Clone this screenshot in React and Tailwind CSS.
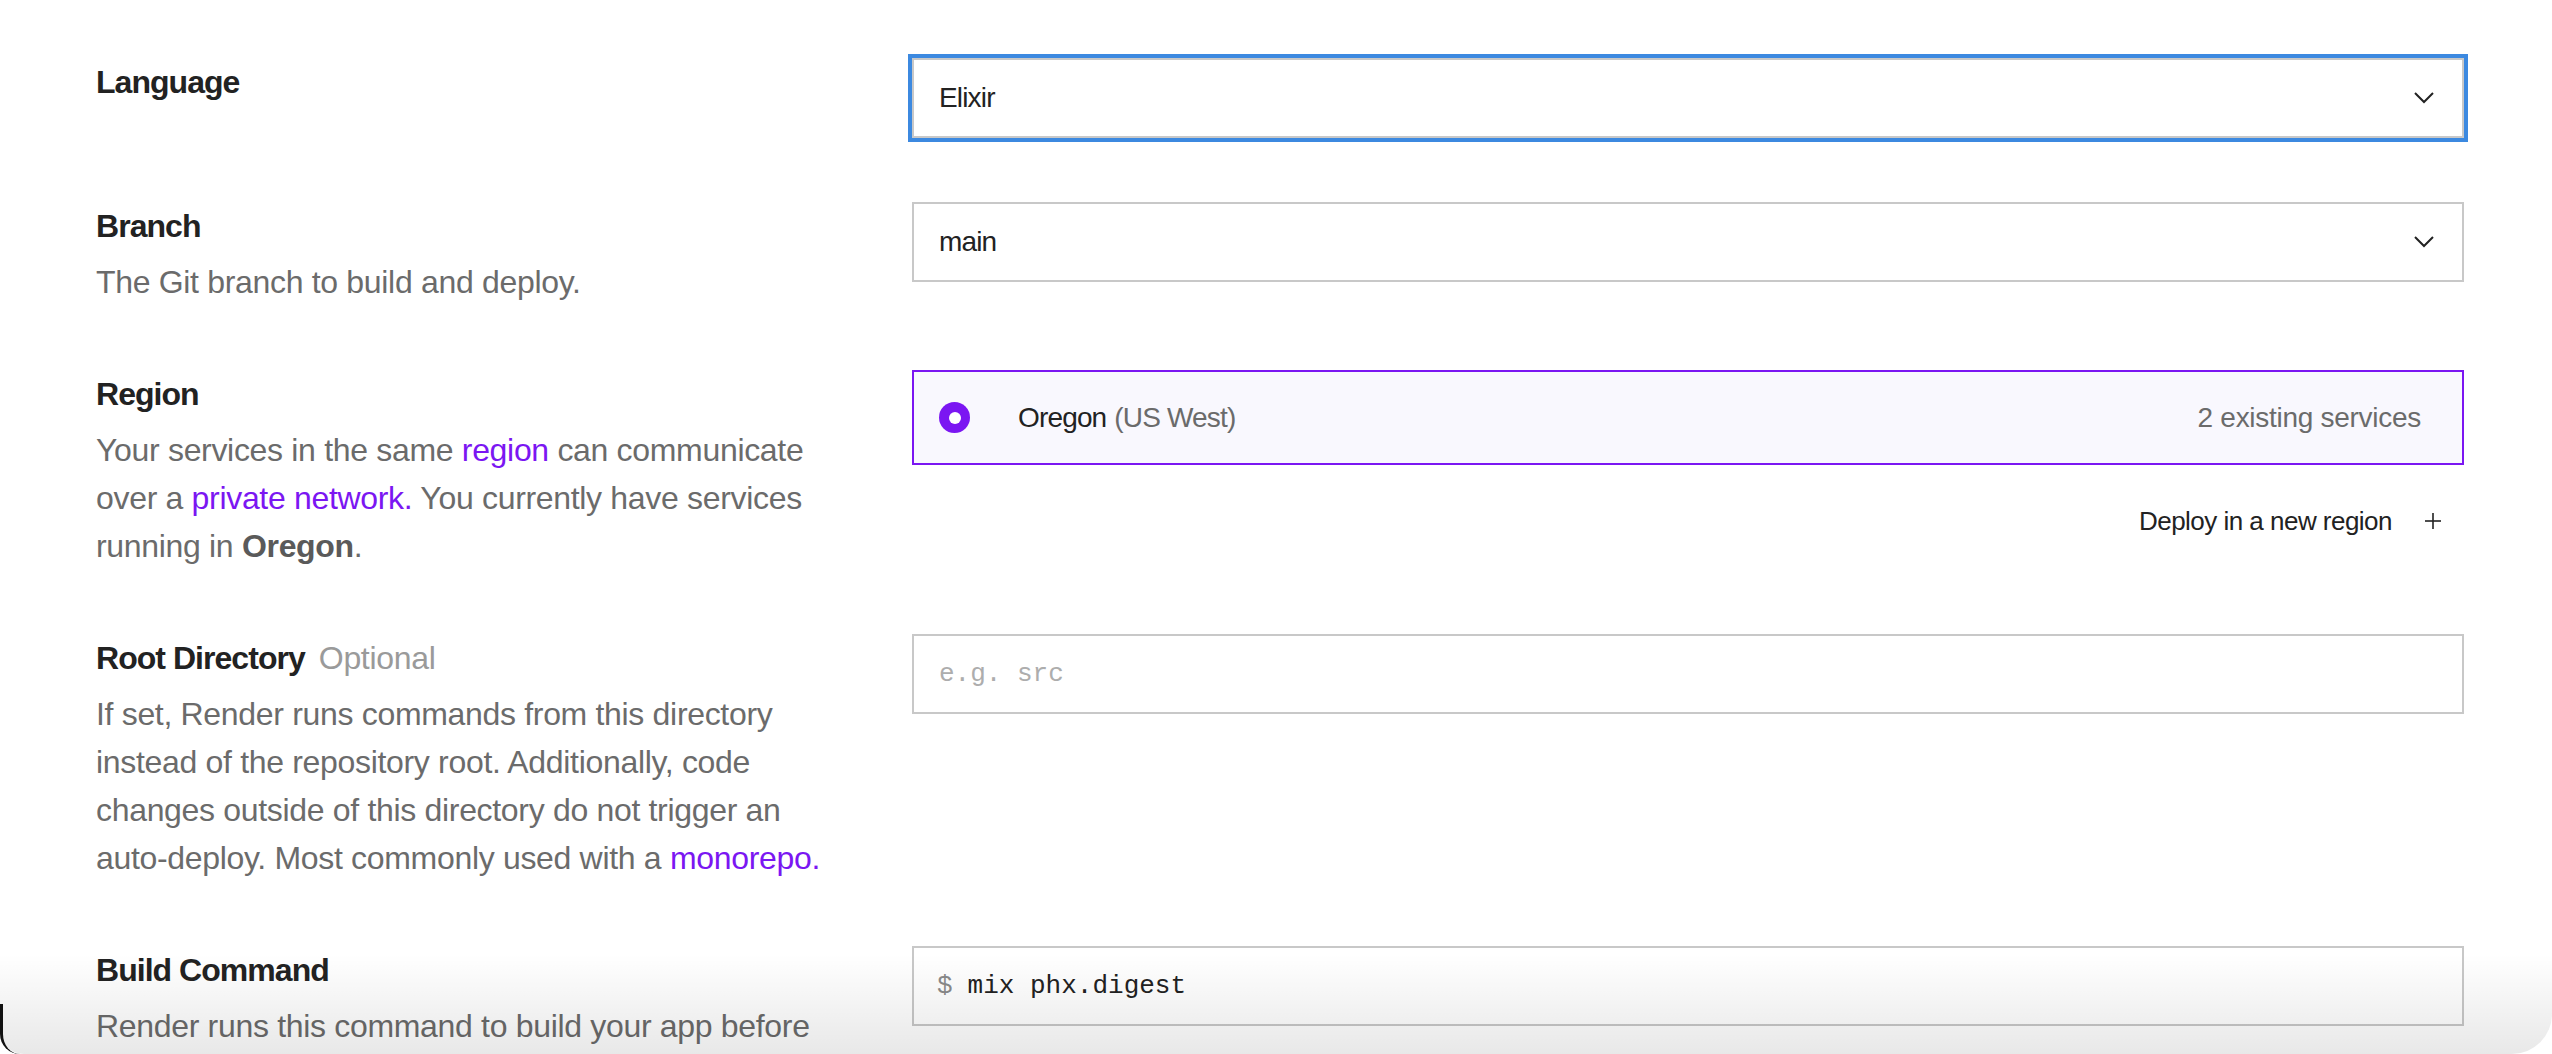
import React from 'react'

// Service settings form: label column on the left, controls on the right

const purple = 'text-[#7b16f2]'

function Label({ children, optional }) {
  return (
    <div className="text-[32px] leading-[48px] font-bold text-[#222] tracking-[-0.03em]">
      {children}
      {optional && (
        <span className="ml-[14px] font-normal text-[#9a9a9a] tracking-[-0.01em]">Optional</span>
      )}
    </div>
  )
}

function Desc({ children }) {
  return (
    <p className="mt-[8px] text-[32px] leading-[48px] text-[#6b6b6b] tracking-[-0.01em]">{children}</p>
  )
}

function Chevron() {
  return (
    <svg width="22" height="14" viewBox="0 0 22 14" fill="none" stroke="#222" strokeWidth="2">
      <polyline points="2,2 11,11 20,2" />
    </svg>
  )
}

function Select({ value, focused }) {
  return (
    <div
      className={`h-[80px] border-2 border-[#c8c8c8] bg-white flex items-center justify-between pl-[25px] pr-[27px] text-[28px] text-[#222] tracking-[-0.03em] ${
        focused ? 'ring-4 ring-[#3c89e0]' : ''
      }`}
    >
      <span>{value}</span>
      <Chevron />
    </div>
  )
}

function Row({ left, right }) {
  return (
    <div className="grid grid-cols-[744px_1fr] gap-x-[72px]">
      <div>{left}</div>
      <div>{right}</div>
    </div>
  )
}

export default function App() {
  return (
    <div className="relative h-[1054px] overflow-hidden bg-white font-['Liberation_Sans',Arial,sans-serif]">
      <div className="pl-[96px] pr-[88px] pt-[58px] flex flex-col gap-[64px]">
        <Row left={<Label>Language</Label>} right={<Select value="Elixir" focused />} />

        <Row
          left={
            <>
              <Label>Branch</Label>
              <Desc>The Git branch to build and deploy.</Desc>
            </>
          }
          right={<Select value="main" />}
        />

        <Row
          left={
            <>
              <Label>Region</Label>
              <Desc>
                Your services in the same <span className={purple}>region</span> can communicate over a{' '}
                <span className={purple}>private network.</span> You currently have services running in{' '}
                <b className="font-bold text-[#5a5a5a]">Oregon</b>.
              </Desc>
            </>
          }
          right={
            <>
              <div className="h-[95px] border-2 border-[#7b16f2] bg-[#f9f8fe] flex items-center pl-[25px] pr-[41px] text-[28px] tracking-[-0.03em]">
                <div className="w-[31px] h-[31px] rounded-full bg-[#7b16f2] flex items-center justify-center">
                  <div className="w-[12px] h-[12px] rounded-full bg-white" />
                </div>
                <span className="ml-[48px] text-[#222]">Oregon</span>
                <span className="ml-[8px] text-[#6b6b6b]">(US West)</span>
                <span className="ml-auto text-[#6b6b6b] tracking-[-0.01em]">2 existing services</span>
              </div>
              <div className="mt-[36px] h-[40px] flex items-center justify-end pr-[22px] text-[26px] text-[#222] tracking-[-0.02em]">
                <span>Deploy in a new region</span>
                <svg className="ml-[32px]" width="18" height="18" viewBox="0 0 18 18" stroke="#222" strokeWidth="1.6">
                  <line x1="9" y1="1" x2="9" y2="17" />
                  <line x1="1" y1="9" x2="17" y2="9" />
                </svg>
              </div>
            </>
          }
        />

        <Row
          left={
            <>
              <Label optional>Root Directory</Label>
              <Desc>
                If set, Render runs commands from this directory instead of the repository root. Additionally, code
                changes outside of this directory do not trigger an auto-deploy. Most commonly used with a{' '}
                <span className={purple}>monorepo.</span>
              </Desc>
            </>
          }
          right={
            <input
              placeholder="e.g. src"
              className="w-full h-[80px] border-2 border-[#c8c8c8] bg-white px-[25px] font-['Liberation_Mono',monospace] text-[26px] text-[#222] placeholder:text-[#adadad] outline-none"
            />
          }
        />

        <Row
          left={
            <>
              <Label>Build Command</Label>
              <Desc>Render runs this command to build your app before each deploy.</Desc>
            </>
          }
          right={
            <div className="h-[80px] border-2 border-[#c8c8c8] bg-white flex items-center px-[23px] font-['Liberation_Mono',monospace] text-[26px] text-[#222]">
              <span className="text-[#8a8a8a]">$</span>
              <span className="ml-[15px]">mix phx.digest</span>
            </div>
          }
        />
      </div>

      {/* soft shadow at the bottom of the window */}
      <div className="pointer-events-none absolute left-0 right-0 bottom-0 h-[100px] bg-linear-to-b from-black/0 to-black/[0.09] rounded-bl-[24px] rounded-br-[40px]" />
      <div className="pointer-events-none absolute left-0 bottom-0 w-[20px] h-[50px] border-l-[3px] border-[#111] rounded-bl-[20px]" />
    </div>
  )
}
